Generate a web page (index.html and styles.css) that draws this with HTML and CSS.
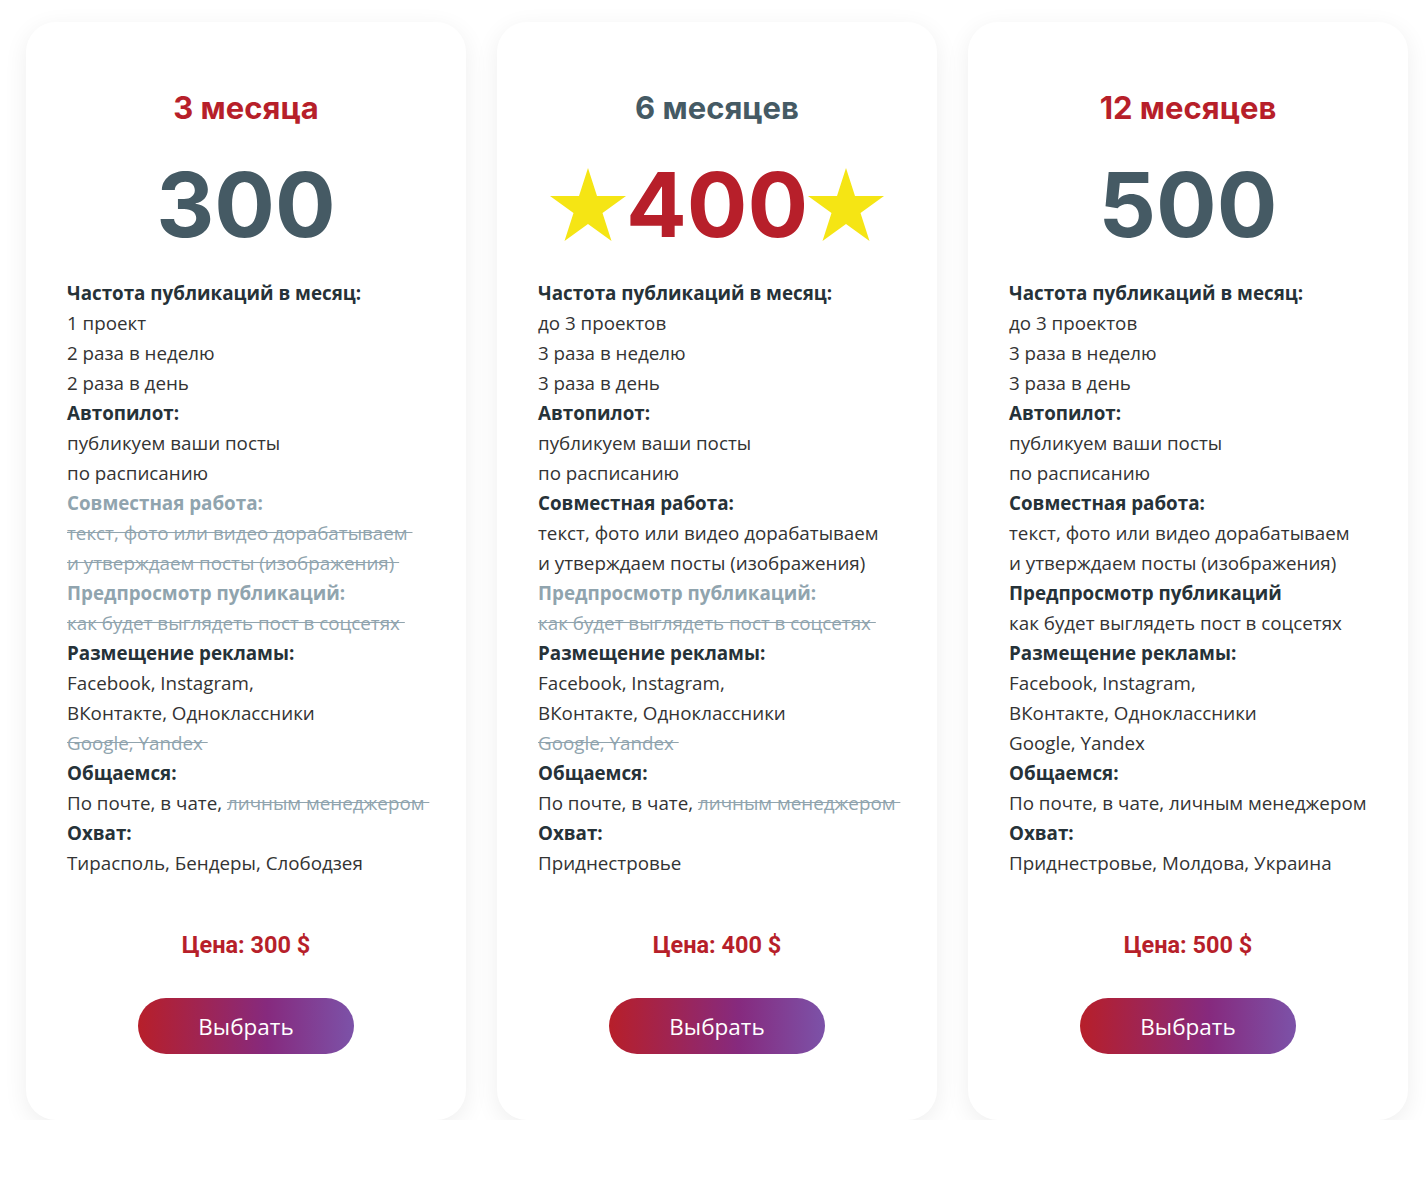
FILE: index.html
```html
<!DOCTYPE html>
<html lang="ru">
<head>
    <meta charset="UTF-8">
    <meta name="viewport" content="width=device-width, initial-scale=1.0">
    <title>Тарифы</title>
    <link rel="stylesheet" href="styles.css">
</head>
<body>

    <div class="tarifs">

        <!-- 3 месяца -->
        <div class="card">
            <h2 class="period red">3 месяца</h2>
            <div class="amount">300</div>
            <div class="info">
                <b>Частота публикаций в месяц:</b><br>
                1 проект<br>
                2 раза в неделю<br>
                2 раза в день<br>
                <b>Автопилот:</b><br>
                публикуем ваши посты<br>
                по расписанию<br>
                <b class="off">Совместная работа:</b><br>
                <s class="off">текст, фото или видео дорабатываем&nbsp;</s><br>
                <s class="off">и утверждаем посты (изображения)&nbsp;</s><br>
                <b class="off">Предпросмотр публикаций:</b><br>
                <s class="off">как будет выглядеть пост в соцсетях&nbsp;</s><br>
                <b>Размещение рекламы:</b><br>
                Facebook, Instagram,<br>
                ВКонтакте, Одноклассники<br>
                <s class="off">Google, Yandex&nbsp;</s><br>
                <b>Общаемся:</b><br>
                По почте, в чате, <s class="off">личным менеджером&nbsp;</s><br>
                <b>Охват:</b><br>
                Тирасполь, Бендеры, Слободзея
            </div>
            <div class="price">Цена: 300 $</div>
            <button class="btn" type="button">Выбрать</button>
        </div>

        <!-- 6 месяцев -->
        <div class="card">
            <h2 class="period">6 месяцев</h2>
            <div class="amount red">
                <svg class="star" viewBox="0 0 76 73"><polygon points="38,0 47,28 76,28 52.5,45 61.5,73 38,56 14.5,73 23.5,45 0,28 29,28"/></svg>
                400
                <svg class="star" viewBox="0 0 76 73"><polygon points="38,0 47,28 76,28 52.5,45 61.5,73 38,56 14.5,73 23.5,45 0,28 29,28"/></svg>
            </div>
            <div class="info">
                <b>Частота публикаций в месяц:</b><br>
                до 3 проектов<br>
                3 раза в неделю<br>
                3 раза в день<br>
                <b>Автопилот:</b><br>
                публикуем ваши посты<br>
                по расписанию<br>
                <b>Совместная работа:</b><br>
                текст, фото или видео дорабатываем<br>
                и утверждаем посты (изображения)<br>
                <b class="off">Предпросмотр публикаций:</b><br>
                <s class="off">как будет выглядеть пост в соцсетях&nbsp;</s><br>
                <b>Размещение рекламы:</b><br>
                Facebook, Instagram,<br>
                ВКонтакте, Одноклассники<br>
                <s class="off">Google, Yandex&nbsp;</s><br>
                <b>Общаемся:</b><br>
                По почте, в чате, <s class="off">личным менеджером&nbsp;</s><br>
                <b>Охват:</b><br>
                Приднестровье
            </div>
            <div class="price">Цена: 400 $</div>
            <button class="btn" type="button">Выбрать</button>
        </div>

        <!-- 12 месяцев -->
        <div class="card">
            <h2 class="period red">12 месяцев</h2>
            <div class="amount">500</div>
            <div class="info">
                <b>Частота публикаций в месяц:</b><br>
                до 3 проектов<br>
                3 раза в неделю<br>
                3 раза в день<br>
                <b>Автопилот:</b><br>
                публикуем ваши посты<br>
                по расписанию<br>
                <b>Совместная работа:</b><br>
                текст, фото или видео дорабатываем<br>
                и утверждаем посты (изображения)<br>
                <b>Предпросмотр публикаций</b><br>
                как будет выглядеть пост в соцсетях<br>
                <b>Размещение рекламы:</b><br>
                Facebook, Instagram,<br>
                ВКонтакте, Одноклассники<br>
                Google, Yandex<br>
                <b>Общаемся:</b><br>
                По почте, в чате, личным менеджером<br>
                <b>Охват:</b><br>
                Приднестровье, Молдова, Украина
            </div>
            <div class="price">Цена: 500 $</div>
            <button class="btn" type="button">Выбрать</button>
        </div>

    </div>

</body>
</html>
```

FILE: styles.css
```css
body {
    margin: 0;
    background-color: #ffffff;
    font-family: "Open Sans", "Noto Sans", sans-serif;
    color: #333333;
}

.tarifs {
    display: flex;
    gap: 31px;
    padding: 22px 0 0 26px;
}

.card {
    width: 440px;
    box-sizing: border-box;
    padding: 66px 41px 66px;
    background-color: #ffffff;
    border-radius: 30px;
    box-shadow: 0 6px 24px rgba(0, 0, 0, 0.07);
    display: flex;
    flex-direction: column;
    align-items: center;
}

.period {
    margin: 0;
    font-family: Inter, "DejaVu Sans", sans-serif;
    font-size: 31px;
    font-weight: 700;
    line-height: 40px;
    color: #455a64;
}

.amount {
    margin-top: 27px;
    height: 100px;
    display: flex;
    align-items: center;
    justify-content: center;
    font-family: Inter, "DejaVu Sans", sans-serif;
    font-size: 90px;
    font-weight: 700;
    line-height: 100px;
    color: #455a64;
}

.red {
    color: #b71f2a;
}

.star {
    width: 76px;
    height: 73px;
    fill: #f5e514;
    margin-top: -2px;
}

.info {
    align-self: stretch;
    margin-top: 23px;
    font-size: 18.8px;
    line-height: 30px;
    white-space: nowrap;
    color: #333333;
}

.info b {
    font-weight: 700;
    color: #263238;
}

.info .off {
    color: #90a4ae;
}

.info s {
    text-decoration: line-through;
}

.price {
    margin-top: 52px;
    font-family: Roboto, "Noto Sans", sans-serif;
    font-size: 23.5px;
    font-weight: 700;
    line-height: 30px;
    color: #b71f2a;
}

.btn {
    margin-top: 38px;
    width: 216px;
    height: 56px;
    border: none;
    border-radius: 28px;
    background: linear-gradient(90deg, #b71f2a 0%, #862a7e 60%, #7c52a8 100%);
    color: #ffffff;
    font-family: "Open Sans", "Noto Sans", sans-serif;
    font-size: 22.5px;
    cursor: pointer;
}
```
